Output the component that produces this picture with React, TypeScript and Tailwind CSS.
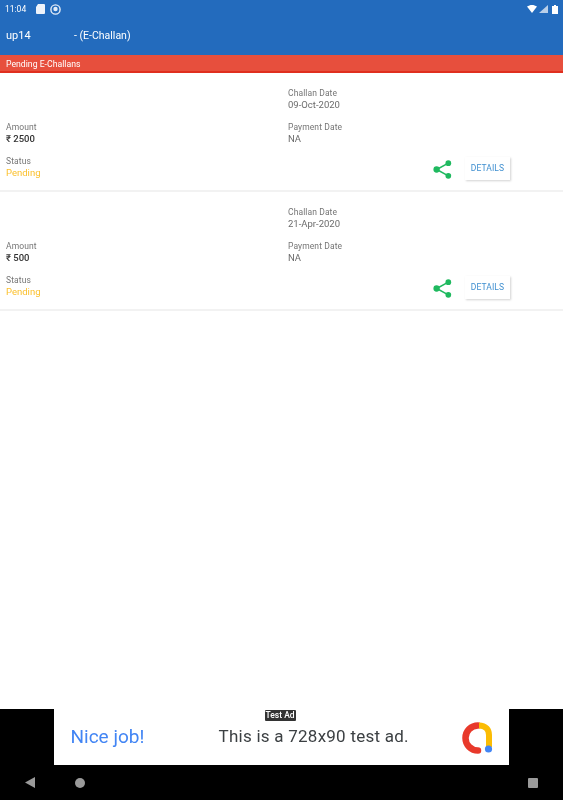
import React from "react";

function Field({ label, value, valueClass }: { label: string; value: string; valueClass: string }) {
  return (
    <div className="h-[26px] flex flex-col justify-end">
      <div className="text-[8.5px] leading-[11px] text-[#757575] tracking-[0.1px]">{label}</div>
      <div className={`text-[9.5px] leading-[12px] ${valueClass}`}>{value}</div>
    </div>
  );
}

function Share() {
  return (
    <svg width="19" height="19" viewBox="0 0 18 18" className="shrink-0">
      <path d="M14.5 3 3.500 9l11 6" fill="none" stroke="#1fb95f" strokeWidth="1.500" />
      <circle cx="14.500" cy="3" r="2.700" fill="#1fb95f" />
      <circle cx="3.400" cy="9" r="3" fill="#1fb95f" />
      <circle cx="14.500" cy="15" r="2.700" fill="#1fb95f" />
    </svg>
  );
}

function Card({ date, amount }: { date: string; amount: string }) {
  return (
    <div className="pt-3 pb-3 pl-[6px] h-[119px] border-b-2 border-[#f2f2f2] bg-white grid grid-cols-[282px_1fr] gap-y-2 content-start">
      <div />
      <Field label="Challan Date" value={date} valueClass="text-[#6b6b6b]" />
      <Field label="Amount" value={`₹ ${amount}`} valueClass="text-[#333333] font-medium" />
      <Field label="Payment Date" value="NA" valueClass="text-[#6b6b6b]" />
      <Field label="Status" value="Pending" valueClass="text-[#fbc02d]" />
      <div className="flex items-center justify-end pr-[53px] pt-[4px]">
        <Share />
        <button className="ml-[13px] mb-[1px] w-[45px] h-[23px] bg-white shadow-[1px_1px_2px_rgba(0,0,0,0.18)] text-[8.5px] text-[#3f8fd0] tracking-[0.1px]">
          DETAILS
        </button>
      </div>
    </div>
  );
}

export default function App() {
  return (
    <div className="w-[563px] h-[800px] flex flex-col bg-white overflow-hidden blur-[0.5px] font-['Roboto',sans-serif]">
      <div className="h-[55px] bg-[#236bbd] shrink-0 text-white">
        <div className="h-[17px] flex items-center pl-[5px] pr-[5px] pt-[1px]">
          <span className="text-[8.5px] w-[30px]">11:04</span>
          <svg width="9" height="10" viewBox="0 0 9 10" className="ml-[1px]">
            <path d="M2 0h6a1 1 0 0 1 1 1v8a1 1 0 0 1-1 1H1a1 1 0 0 1-1-1V3z" fill="#eef3fa" />
          </svg>
          <svg width="11" height="11" viewBox="0 0 11 11" className="ml-[5px]">
            <circle cx="5.500" cy="5.500" r="4.600" fill="none" stroke="#e3ecf7" strokeWidth="1.400" />
            <circle cx="5.500" cy="5" r="2.200" fill="#e3ecf7" />
          </svg>
          <div className="ml-auto flex items-center gap-[2px]">
            <svg width="10" height="8" viewBox="0 0 10 8">
              <path d="M0 1.600C3-.5 7-.5 10 1.600L5 8z" fill="#fff" />
            </svg>
            <svg width="9" height="8" viewBox="0 0 9 8">
              <path d="M9 0v8H0z" fill="#b9cfe9" />
            </svg>
            <svg width="6" height="9" viewBox="0 0 6 9" className="ml-[2px]">
              <path d="M2 0h2v1h2v8H0V1h2z" fill="#fff" />
            </svg>
          </div>
        </div>
        <div className="h-[38px] flex items-center pl-[6px] text-[11px]">
          <span className="w-[68px]">up14</span>
          <span className="text-[10.5px]">- (E-Challan)</span>
        </div>
      </div>
      <div className="h-[18px] shrink-0 bg-[#e74f3d] border-b-2 border-[#e02f1f] flex items-center pl-[6px] pt-[4px] text-[8.700px] text-white">
        Pending E-Challans
      </div>
      <Card date="09-Oct-2020" amount="2500" />
      <Card date="21-Apr-2020" amount="500" />
      <div className="flex-1" />
      <div className="h-[56px] shrink-0 bg-black flex justify-center">
        <div className="relative w-[455px] ml-[-1px] bg-white flex items-center">
          <span className="absolute top-[1px] left-[211px] h-[11px] px-[1px] rounded-[1px] bg-[#333] text-white text-[8.500px] leading-[11px] font-medium">
            Test Ad
          </span>
          <span className="ml-[17px] text-[#4285f4] text-[19px] w-[148px]">Nice job!</span>
          <span className="text-[#3c4043] text-[17px] tracking-[0.25px]">This is a 728x90 test ad.</span>
          <svg width="34" height="34" viewBox="0 0 34 34" className="absolute left-[406px] top-[12px]">
            <path d="M18 4.500A12.500 12.500 0 1 0 18 29.500" fill="none" stroke="#e8392b" strokeWidth="6.500" strokeLinecap="round" />
            <path d="M19 4.500C26 4.500 29 9 29 14V26" fill="none" stroke="#fbbc04" strokeWidth="6" />
            <circle cx="28.500" cy="28" r="3.600" fill="#4285f4" />
          </svg>
        </div>
      </div>
      <div className="h-[35px] shrink-0 bg-black relative flex items-center pl-[25px] pr-[25px]">
        <svg width="10" height="11" viewBox="0 0 10 11">
          <path d="M10 0v11L0 5.500z" fill="#9a9a9a" />
        </svg>
        <div className="ml-[40px] w-[10px] h-[10px] rounded-full bg-[#9a9a9a]" />
        <div className="ml-auto w-[10px] h-[10px] rounded-[1px] bg-[#9a9a9a]" />
      </div>
    </div>
  );
}
